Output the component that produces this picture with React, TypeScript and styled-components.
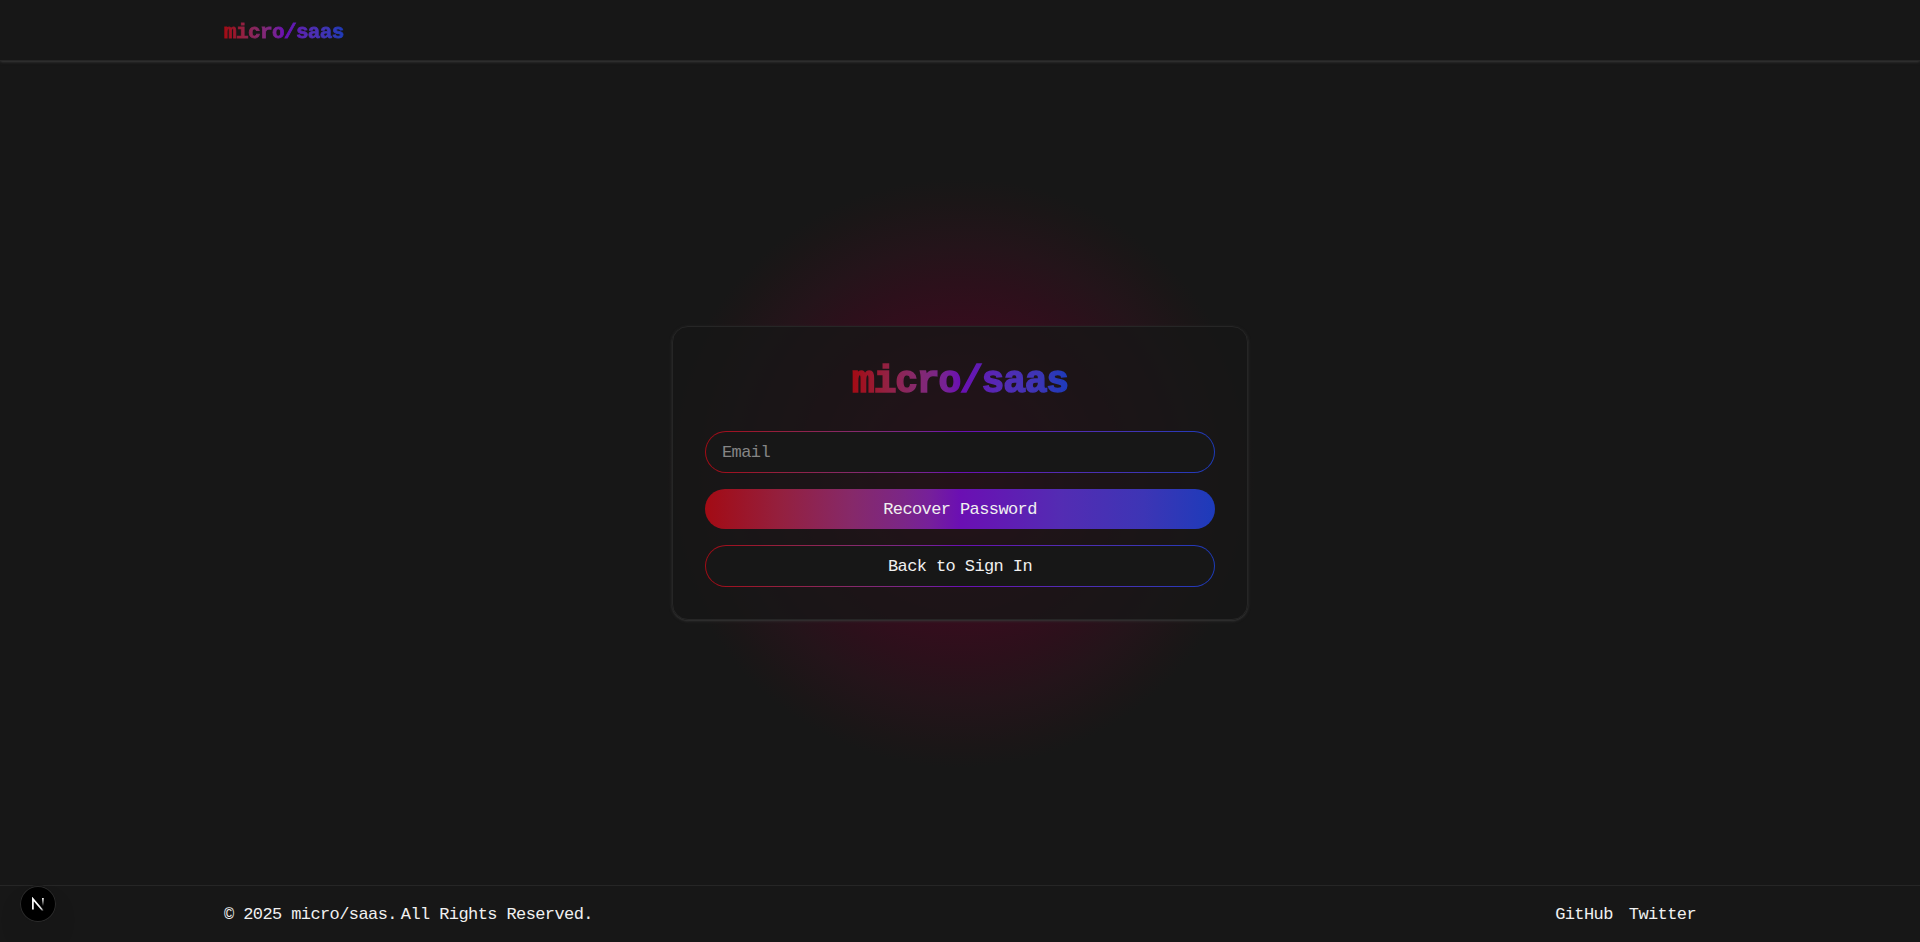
import React from "react";
import styled, { createGlobalStyle } from "styled-components";

const brandGradient =
  "linear-gradient(to right, #a30b14 0%, #94203f 15%, #86296a 29%, #7b2687 39%, #76209a 44%, #6b0fb3 50%, #532cb3 70%, #3d35b5 86%, #1d3bba 100%)";

const edgeShadow = "0 1px 3px 0 #353535, 0 1px 2px -1px #353535";

const GlobalStyle = createGlobalStyle`
  *, *::before, *::after { box-sizing: border-box; }
  body {
    margin: 0;
    background: #171717;
    color: #f0f0f0;
    font: 17px/24px "Liberation Mono", monospace;
    letter-spacing: -0.6px;
  }
`;

const Page = styled.div`
  position: relative;
  display: flex;
  flex-direction: column;
  height: 100vh;
  overflow: hidden;
`;

const Container = styled.div`
  display: flex;
  align-items: center;
  justify-content: space-between;
  width: 100%;
  max-width: 1536px;
  margin: 0 auto;
  padding: 0 32px;
`;

const Header = styled.header`
  display: flex;
  height: 61px;
  padding-top: 3px;
  border-bottom: 1px solid #262626;
  box-shadow: ${edgeShadow};
`;

const Logo = styled.span<{ $large?: boolean }>`
  padding-top: ${(p) => (p.$large ? 5 : 1)}px;
  font-size: ${(p) => (p.$large ? 38 : 21)}px;
  line-height: ${(p) => (p.$large ? 35 : 27)}px;
  font-weight: 700;
  letter-spacing: ${(p) => (p.$large ? -1.22 : -0.62)}px;
  color: transparent;
  background: ${brandGradient};
  background-clip: text;
  -webkit-background-clip: text;
  -webkit-text-stroke: ${(p) => (p.$large ? 1.5 : 0.8)}px transparent;
`;

const Main = styled.main`
  flex: 1;
  display: flex;
  align-items: center;
  justify-content: center;
  background: radial-gradient(
    circle 295px at 50% 50%,
    #5a0320 0%,
    #350d1d 49%,
    #2c101b 64%,
    #24141a 77%,
    #1b1617 92%,
    rgba(23, 23, 23, 0) 100%
  );
`;

const Card = styled.form`
  display: flex;
  flex-direction: column;
  width: 576px;
  padding: 32px;
  border: 1px solid #262626;
  border-radius: 16px;
  background: rgba(23, 23, 23, 0.8);
  box-shadow: ${edgeShadow};
`;

const Title = styled.h1`
  display: flex;
  justify-content: center;
  margin: 0 0 32px;
`;

const Fields = styled.div`
  display: flex;
  flex-direction: column;
  gap: 16px;
`;

const Outline = styled.div`
  display: flex;
  height: 42px;
  padding: 1px;
  border-radius: 21px;
  background: ${brandGradient};
`;

const Input = styled.input`
  flex: 1;
  min-width: 0;
  padding: 2px 16px 0;
  border: 0;
  border-radius: 20px;
  outline: 0;
  background: #171717;
  color: #f0f0f0;
  font: inherit;
  letter-spacing: inherit;
  &::placeholder { color: #858585; opacity: 1; }
`;

const Button = styled.button<{ $filled?: boolean }>`
  flex: 1 0 auto;
  height: 40px;
  padding: 2px 16px 0;
  border: 0;
  border-radius: 20px;
  background: ${(p) => (p.$filled ? brandGradient : "#171717")};
  color: #f0f0f0;
  font: inherit;
  letter-spacing: inherit;
`;

const Footer = styled.footer`
  display: flex;
  height: 57px;
  padding-top: 2px;
  border-top: 1px solid #262626;
`;

const Copyright = styled.div`
  display: flex;
  gap: 4px;
`;

const Links = styled.nav`
  display: flex;
  gap: 16px;
`;

const FooterLink = styled.a`
  color: inherit;
  text-decoration: none;
`;

const DevBadge = styled.div`
  position: absolute;
  left: 20px;
  bottom: 20px;
  width: 36px;
  height: 36px;
  display: grid;
  place-items: center;
  border-radius: 50%;
  background: #000;
  box-shadow: 0 0 0 1px #171717, inset 0 0 0 1px #2b2b2b, 0 16px 32px -8px rgba(0, 0, 0, 0.24);
`;

const NextMark = () => (
  <svg width="14" height="14" viewBox="0 0 14 14" fill="none">
    <defs>
      <linearGradient id="diag" x1="8" y1="8.5" x2="12.5" y2="14" gradientUnits="userSpaceOnUse">
        <stop stopColor="#fff" />
        <stop offset="0.6" stopColor="#fff" stopOpacity="0.8" />
        <stop offset="1" stopColor="#fff" stopOpacity="0" />
      </linearGradient>
      <linearGradient id="stem" x1="11" y1="1" x2="11" y2="9" gradientUnits="userSpaceOnUse">
        <stop stopColor="#fff" />
        <stop offset="1" stopColor="#fff" stopOpacity="0" />
      </linearGradient>
    </defs>
    <path d="M1.9 12.4V1.9L12.2 14" stroke="url(#diag)" strokeWidth="1.7" />
    <path d="M11.9 1v8" stroke="url(#stem)" strokeWidth="1.7" />
  </svg>
);

export default function App() {
  return (
    <Page>
      <GlobalStyle />
      <Header>
        <Container>
          <Logo>micro/saas</Logo>
        </Container>
      </Header>
      <Main>
        <Card>
          <Title>
            <Logo $large>micro/saas</Logo>
          </Title>
          <Fields>
            <Outline>
              <Input type="email" placeholder="Email" />
            </Outline>
            <Button type="submit" $filled>Recover Password</Button>
            <Outline>
              <Button type="button">Back to Sign In</Button>
            </Outline>
          </Fields>
        </Card>
      </Main>
      <Footer>
        <Container>
          <Copyright>
            <span>© 2025 micro/saas.</span>
            <span>All Rights Reserved.</span>
          </Copyright>
          <Links>
            <FooterLink href="#">GitHub</FooterLink>
            <FooterLink href="#">Twitter</FooterLink>
          </Links>
        </Container>
      </Footer>
      <DevBadge>
        <NextMark />
      </DevBadge>
    </Page>
  );
}
